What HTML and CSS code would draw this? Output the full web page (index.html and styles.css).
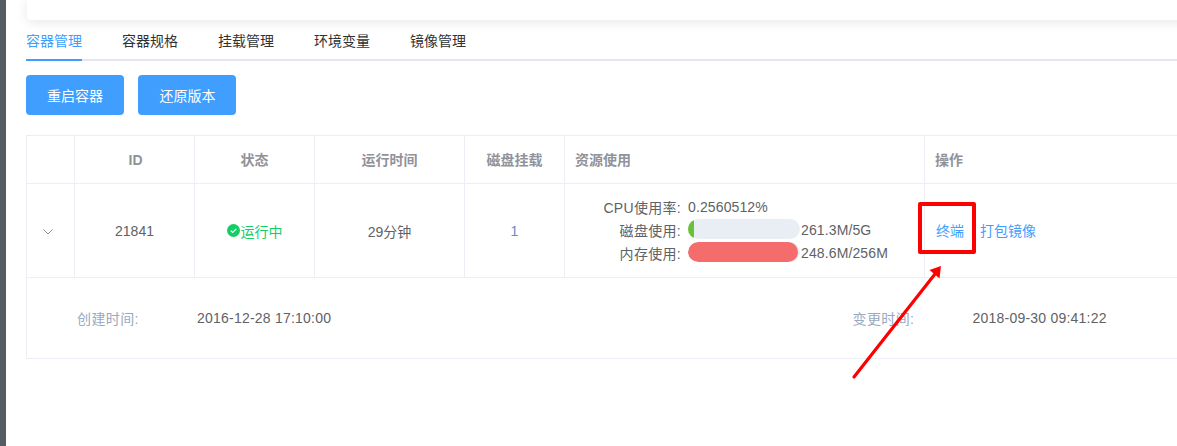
FILE: index.html
```html
<!DOCTYPE html>
<html lang="zh">
<head>
<meta charset="utf-8">
<title>容器管理</title>
<link rel="stylesheet" href="styles.css">
</head>
<body>
<div class="app">
  <aside class="rail"></aside>
  <main class="content">
    <div class="top-card"></div>
    <nav class="tabs">
      <a class="tab active">容器管理</a>
      <a class="tab">容器规格</a>
      <a class="tab">挂载管理</a>
      <a class="tab">环境变量</a>
      <a class="tab">镜像管理</a>
    </nav>
    <div class="actions">
      <button class="btn">重启容器</button>
      <button class="btn">还原版本</button>
    </div>
    <div class="table">
      <div class="row head">
        <div class="cell c-exp"></div>
        <div class="cell c-id center">ID</div>
        <div class="cell c-state center">状态</div>
        <div class="cell c-time center">运行时间</div>
        <div class="cell c-disk center">磁盘挂载</div>
        <div class="cell c-res left">资源使用</div>
        <div class="cell c-op left">操作</div>
      </div>
      <div class="row body">
        <div class="cell c-exp center">
          <svg class="chevron" width="10" height="6" viewBox="0 0 10 6"><path d="M.5.5 5 5 9.500.5" fill="none" stroke="#8a8f99" stroke-width="1"/></svg>
        </div>
        <div class="cell c-id center">21841</div>
        <div class="cell c-state center running">
          <svg class="ok" width="13" height="13" viewBox="0 0 13 13"><circle cx="6.500" cy="6.500" r="6.500" fill="#13ce66"/><path d="M3.800 6.700 5.700 8.500 9.300 4.800" fill="none" stroke="#fff" stroke-width="1.200"/></svg>运行中
        </div>
        <div class="cell c-time center">29分钟</div>
        <div class="cell c-disk center link-num">1</div>
        <div class="cell c-res">
          <div class="res">
            <div class="res-line"><span class="res-label">CPU使用率:</span><span class="res-num">0.2560512%</span></div>
            <div class="res-line"><span class="res-label">磁盘使用:</span><span class="bar"><span class="fill green" style="width:5%"></span></span><span class="res-num">261.3M/5G</span></div>
            <div class="res-line"><span class="res-label">内存使用:</span><span class="bar"><span class="fill red" style="width:98%"></span></span><span class="res-num">248.6M/256M</span></div>
          </div>
        </div>
        <div class="cell c-op ops"><a class="op">终端</a><a class="op">打包镜像</a></div>
      </div>
      <div class="detail">
        <span class="d-label">创建时间:</span><span class="d-value">2016-12-28 17:10:00</span>
        <span class="d-label">变更时间:</span><span class="d-value">2018-09-30 09:41:22</span>
      </div>
    </div>
  </main>
</div>
<div class="mark-box"></div>
<svg class="mark-arrow" width="100" height="125" viewBox="0 0 100 125">
  <path d="M4 116 85 13" fill="none" stroke="#ff0000" stroke-width="3.200" stroke-linecap="round"/>
  <path d="M91 5 89.500 17.500 79.500 9Z" fill="#ff0000"/>
</svg>
</body>
</html>
```
FILE: styles.css
```css
* { box-sizing: border-box; }
html, body { margin: 0; height: 100%; overflow: hidden; background: #fff; }
body {
  font-family: "Liberation Sans", "Noto Sans CJK SC", sans-serif;
  font-size: 14px;
  color: #5e6d82;
}
.app { display: flex; width: 1177px; height: 446px; overflow: hidden; }
.rail { width: 6px; flex: none; background: #545c64; }
.content { flex: 1; min-width: 0; padding-left: 20px; }
.top-card {
  height: 20px;
  width: 1300px;
  margin-left: 1px;
  background: #fff;
  border-radius: 0 0 4px 4px;
  box-shadow: 0 2px 12px rgba(0, 0, 0, .1);
}
.tabs {
  display: flex;
  gap: 40px;
  height: 41px;
  border-bottom: 2px solid #e4e7ed;
}
.tab {
  height: 41px;
  line-height: 43px;
  color: #303133;
  font-size: 14px;
}
.tab.active { color: #409eff; border-bottom: 2px solid #409eff; }
.actions { display: flex; gap: 14px; margin-top: 14px; }
.btn {
  width: 98px;
  height: 40px;
  padding: 0;
  border: 0;
  border-radius: 4px;
  background: #409eff;
  color: #fff;
  font: inherit;
}
.btn + .btn { padding-left: 1px; }
.table {
  margin-top: 20px;
  width: 1300px;
  border: 1px solid #ebeef5;
  border-width: 1px 0 1px 1px;
}
.row { display: flex; border-bottom: 1px solid #ebeef5; }
.row.head { height: 48px; color: #909399; font-weight: 700; font-size: 14px; }
.row.head .cell { padding-bottom: 2px; }
.row.head .c-id { padding: 0 0 0 2px; }
.row.body { height: 94px; color: #606266; font-size: 14px; }
.cell {
  display: flex;
  flex: none;
  align-items: center;
  border-right: 1px solid #ebeef5;
}
.center { justify-content: center; }
.left { padding-left: 10px; }
.c-exp { width: 48px; }
.chevron { margin: 2px 6px 0 0; }
.c-id { width: 120px; }
.c-state { width: 120px; }
.c-time { width: 150px; }
.c-disk { width: 100px; }
.c-res { width: 360px; }
.c-op { flex: 1; border-right: 0; }
.running { color: #13ce66; }
.ok { margin-right: 1px; }
.link-num { color: #6f87c4; }
.res { display: flex; flex-direction: column; gap: 3px; width: 100%; margin-bottom: 3px; font-size: 14px; color: #606266; }
.res-line { display: flex; align-items: center; height: 20px; }
.res-label { width: 116px; margin-right: 7px; padding-top: 1px; text-align: right; letter-spacing: .3px; }
.res-num { padding-top: 2px; letter-spacing: .12px; }
.bar {
  width: 112px;
  height: 20px;
  margin-right: 1px;
  border-radius: 10px;
  background: #e9edf4;
  overflow: hidden;
}
.fill { display: block; height: 100%; border-radius: 10px; }
.fill.green { background: #67c23a; }
.fill.red { background: #f56c6c; }
.ops { gap: 16px; padding: 0 0 2px 11px; font-size: 14px; }
.op { color: #409eff; }
.detail {
  display: flex;
  align-items: center;
  height: 80px;
  padding-left: 50px;
  color: #606266;
  font-size: 14px;
}
.d-label { flex: none; width: 120px; color: #99a9bf; letter-spacing: .4px; }
.d-value { flex: none; width: 655.500px; letter-spacing: .22px; }
.mark-box {
  position: absolute;
  left: 918px;
  top: 202px;
  width: 58px;
  height: 52px;
  border: 4px solid #ff0000;
  border-radius: 2px;
}
.mark-arrow { position: absolute; left: 850px; top: 261px; }
```
